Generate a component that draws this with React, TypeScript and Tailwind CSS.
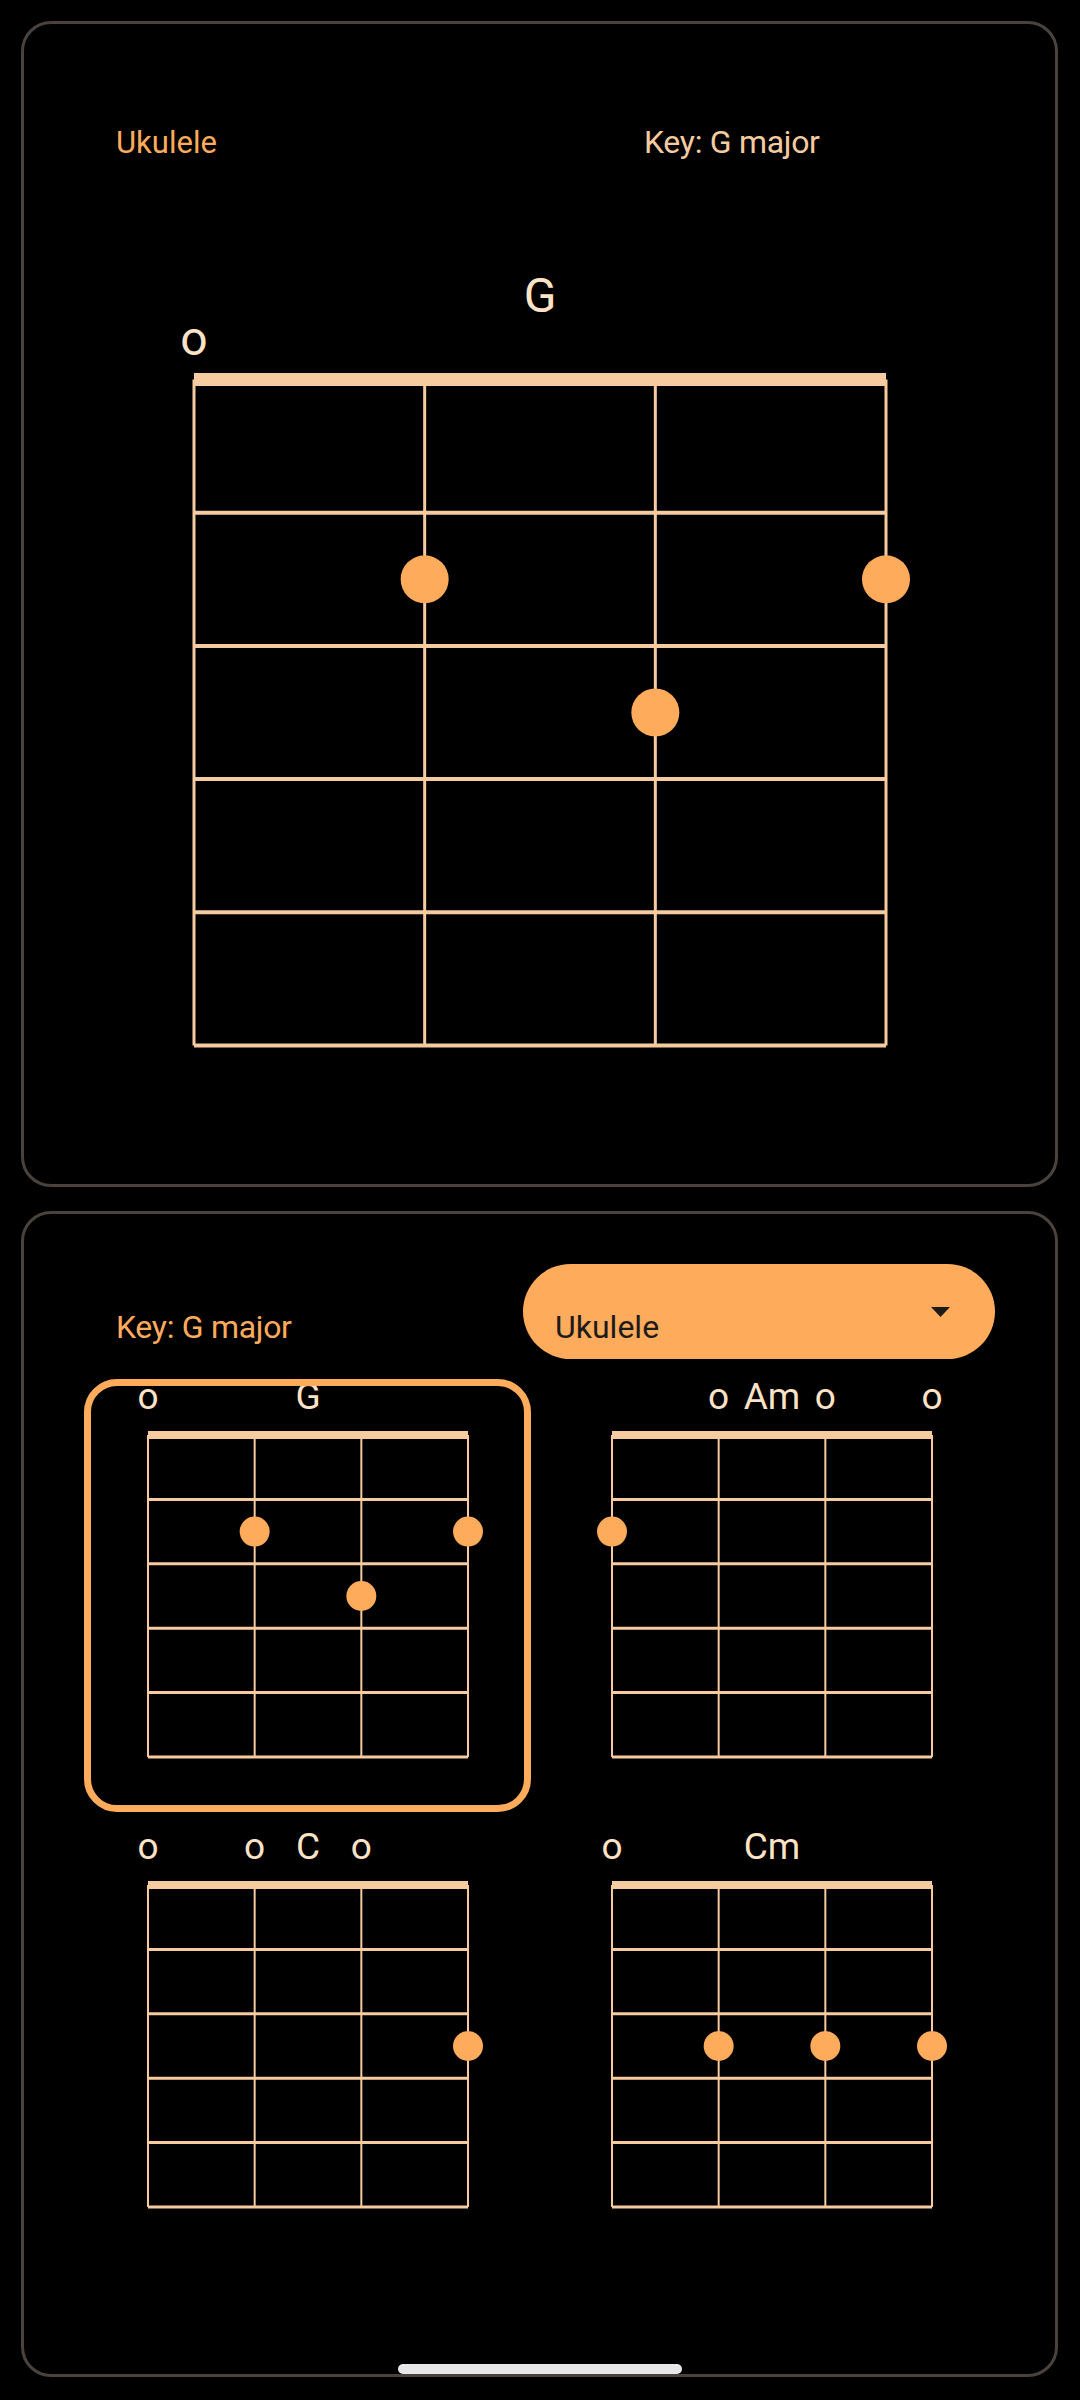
import React from "react";

type Chord = { name: string; frets: number[] };

const CHORDS: Chord[] = [
  { name: "G", frets: [0, 2, 3, 2] },
  { name: "Am", frets: [2, 0, 0, 0] },
  { name: "C", frets: [0, 0, 0, 3] },
  { name: "Cm", frets: [0, 3, 3, 3] },
];

const SIZES = {
  lg: { span: 692, fretH: 133.2, nutH: 13, fretW: 4, stringW: 3, dotR: 24, labelArea: 113, nameTop: 12, openTop: 55, font: "text-[48px]" },
  sm: { span: 320, fretH: 64.4, nutH: 8, fretW: 3, stringW: 2, dotR: 15, labelArea: 60, nameTop: 7, openTop: 7, font: "text-[37px]" },
};

const ChordDiagram = ({ chord, size }: { chord: Chord; size: "lg" | "sm" }) => {
  const s = SIZES[size];
  const mid = s.nutH / 2;
  const gridH = mid + s.fretH * 5;
  const xs = [0, 1, 2, 3].map((i) => (i * s.span) / 3);

  return (
    <div className="relative" style={{ width: s.span, height: s.labelArea + gridH + 2 }}>
      <div
        className={`absolute left-1/2 -translate-x-1/2 leading-none text-[#ffe3c6] ${s.font}`}
        style={{ top: s.nameTop }}
      >
        {chord.name}
      </div>
      {chord.frets.map((f, i) =>
        f === 0 ? (
          <div
            key={i}
            className={`absolute -translate-x-1/2 leading-none text-[#ffe3c6] ${s.font}`}
            style={{ left: xs[i], top: s.openTop }}
          >
            o
          </div>
        ) : null
      )}
      <svg
        className="absolute left-0 overflow-visible"
        style={{ top: s.labelArea }}
        width={s.span}
        height={gridH}
      >
        <rect x={0} y={0} width={s.span} height={s.nutH} fill="#f6cba0" />
        {xs.map((x, i) => (
          <line key={i} x1={x} x2={x} y1={mid} y2={gridH} stroke="#f6cba0" strokeWidth={s.stringW} />
        ))}
        {[1, 2, 3, 4, 5].map((k) => (
          <line
            key={k}
            x1={0}
            x2={s.span}
            y1={mid + k * s.fretH}
            y2={mid + k * s.fretH}
            stroke="#f6cba0"
            strokeWidth={s.fretW}
          />
        ))}
        {chord.frets.map((f, i) =>
          f > 0 ? <circle key={i} cx={xs[i]} cy={mid + (f - 0.5) * s.fretH} r={s.dotR} fill="#ffab5c" /> : null
        )}
      </svg>
    </div>
  );
};

const App = () => {
  return (
    <div className="relative w-[1080px] h-[2400px] bg-black pt-[21px] pl-[21px] font-['Roboto','Noto_Sans',sans-serif]">
      {/* current chord */}
      <div className="w-[1037px] h-[1166px] rounded-[30px] border-[3px] border-[#4a433d]">
        <div className="flex items-baseline mt-[102px]">
          <span className="ml-[92px] w-[528px] text-[31px] leading-none text-[#ffab5c]">Ukulele</span>
          <span className="text-[32px] leading-none tracking-[-0.3px] text-[#f6cba0]">Key: G major</span>
        </div>
        <div className="mt-[102px] ml-[170px]">
          <ChordDiagram chord={CHORDS[0]} size="lg" />
        </div>
      </div>

      {/* chord picker */}
      <div className="mt-[24px] w-[1037px] h-[1166px] rounded-[30px] border-[3px] border-[#4a433d]">
        <div className="flex items-start mt-[50px]">
          <span className="ml-[92px] mt-[47px] w-[407px] text-[32px] leading-none tracking-[-0.3px] text-[#ffab5c]">Key: G major</span>
          <div className="relative w-[472px] h-[95px] rounded-full bg-[#ffab5c] pl-[32px] pt-[47px]">
            <span className="text-[32px] leading-none text-[#1d1b1a]">Ukulele</span>
            <svg className="absolute right-[45px] top-[43px]" width="19" height="10" viewBox="0 0 19 10">
              <polygon points="0,0 19,0 9.5,10" fill="#1d1b1a" />
            </svg>
          </div>
        </div>
        <div className="grid grid-cols-2 w-[928px] ml-[52px] mt-[12px]">
          {CHORDS.map((c, i) => (
            <div key={c.name} className="relative h-[450px] flex justify-center">
              <ChordDiagram chord={c} size="sm" />
              {i === 0 && (
                <div className="absolute left-[8px] top-[8px] w-[447px] h-[433px] rounded-[33px] border-[7px] border-[#ffab5c]" />
              )}
            </div>
          ))}
        </div>
      </div>

      <div className="absolute left-[398px] top-[2364px] w-[284px] h-[10px] rounded-full bg-[#e8e8e8]" />
    </div>
  );
};

export default App;
